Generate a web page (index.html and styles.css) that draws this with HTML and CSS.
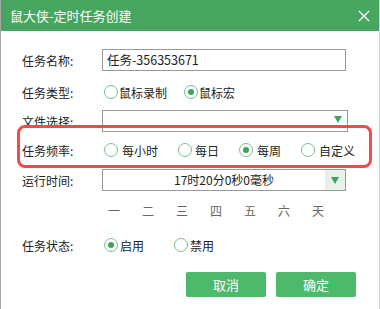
FILE: index.html
```html
<!DOCTYPE html>
<html lang="zh-CN">
<head>
    <meta charset="UTF-8">
    <title>鼠大侠-定时任务创建</title>
    <link rel="stylesheet" href="styles.css">
</head>
<body>
    <div class="dialog">
        <div class="title-bar">
            <span class="title">鼠大侠-定时任务创建</span>
            <svg class="close" width="12" height="12" viewBox="0 0 12 12">
                <path d="M1 1L11 11M11 1L1 11" stroke="#fff" stroke-width="1.4"/>
            </svg>
        </div>

        <div class="form">
            <div class="row row-name">
                <span class="label">任务名称:</span>
                <div class="box text-box">任务-356353671</div>
            </div>

            <div class="row row-type">
                <span class="label">任务类型:</span>
                <label class="radio tight"><span class="dot"></span>鼠标录制</label>
                <label class="radio tight"><span class="dot checked"></span>鼠标宏</label>
            </div>

            <div class="row row-file">
                <span class="label">文件选择:</span>
                <div class="box select-box">
                    <span class="arrow"></span>
                </div>
            </div>

            <div class="row row-freq">
                <span class="label">任务频率:</span>
                <label class="radio"><span class="dot"></span>每小时</label>
                <label class="radio"><span class="dot"></span>每日</label>
                <label class="radio"><span class="dot checked"></span>每周</label>
                <label class="radio"><span class="dot"></span>自定义</label>
            </div>

            <div class="row row-time">
                <span class="label">运行时间:</span>
                <div class="box time-box">
                    <span class="time-value">17时20分0秒0毫秒</span>
                    <span class="time-btn"><span class="arrow"></span></span>
                </div>
            </div>

            <div class="row row-week">
                <span class="label"></span>
                <div class="weekdays">
                    <span>一</span><span>二</span><span>三</span><span>四</span><span>五</span><span>六</span><span>天</span>
                </div>
            </div>

            <div class="row row-status">
                <span class="label">任务状态:</span>
                <label class="radio status"><span class="dot checked"></span>启用</label>
                <label class="radio status"><span class="dot"></span>禁用</label>
            </div>

            <div class="actions">
                <button type="button" class="btn">取消</button>
                <button type="button" class="btn">确定</button>
            </div>
        </div>

        <!-- highlight around the frequency row -->
        <div class="highlight"></div>
    </div>
</body>
</html>
```

FILE: styles.css
```css
body {
    margin: 0;
    font-family: "Noto Sans CJK SC", "Liberation Sans", sans-serif;
    font-size: 12px;
    color: #222;
    background: #fff;
}

.dialog {
    position: relative;
    width: 380px;
    height: 309px;
    box-sizing: border-box;
    border-left: 1px solid #a8a8a8;
    border-right: 1px solid #d0d0d0;
    overflow: hidden;
}

.title-bar {
    display: flex;
    align-items: center;
    justify-content: space-between;
    height: 31px;
    margin: 0 -1px;
    padding: 0 10px 0 10px;
    background: #46a660;
    color: #fff;
}

.title {
    font-size: 13px;
}

.form {
    padding: 18px 0 0 21px;
}

.row {
    display: flex;
    align-items: center;
    height: 22px;
    white-space: nowrap;
}

.label {
    width: 80px;
    flex: none;
}

.row-type { margin-top: 10px; }
.row-file { margin-top: 7px; }
.row-freq { margin-top: 7px; }
.row-time { margin-top: 8px; }
.row-week { margin-top: 8px; }
.row-status { margin-top: 13px; }

.box {
    box-sizing: border-box;
    height: 22px;
    border: 1px solid #999;
    background: #fff;
}

.text-box {
    width: 244px;
    padding-left: 4px;
    line-height: 20px;
    font-size: 12.5px;
}

.select-box {
    position: relative;
    width: 246px;
}

.arrow {
    display: block;
    width: 0;
    height: 0;
    border-left: 4px solid transparent;
    border-right: 4px solid transparent;
    border-top: 7px solid #3fa55b;
}

.select-box .arrow {
    position: absolute;
    right: 5px;
    top: 5px;
}

.time-box {
    display: flex;
    width: 244px;
    padding-left: 20px;
}

.time-value {
    flex: 1;
    text-align: center;
    line-height: 20px;
}

.time-btn {
    display: flex;
    align-items: center;
    justify-content: center;
    width: 20px;
    background: #e6f1e7;
}

.radio {
    display: inline-flex;
    flex: none;
    align-items: center;
    gap: 4px;
    margin-left: 2px;
    margin-right: 18px;
}

.radio.tight {
    gap: 1px;
    margin-right: 15px;
}

.radio.status {
    gap: 2px;
    margin-right: 28px;
}

.row-freq .radio:nth-of-type(2) {
    gap: 3px;
}

.dot {
    position: relative;
    flex: none;
    box-sizing: border-box;
    width: 14px;
    height: 14px;
    border: 1.5px solid #79c08a;
    border-radius: 50%;
    background: #fff;
}

.dot.checked::after {
    content: "";
    position: absolute;
    left: 2.5px;
    top: 2.5px;
    width: 6px;
    height: 6px;
    border-radius: 50%;
    background: #3da558;
}

.weekdays {
    display: flex;
    gap: 22px;
    padding-left: 6px;
    color: #666;
}

.actions {
    display: flex;
    gap: 10px;
    margin-top: 16px;
    padding-left: 164px;
}

.btn {
    width: 80px;
    height: 25px;
    border: none;
    border-radius: 2px;
    background: #4eb86b;
    color: #fff;
    font-family: inherit;
    font-size: 13px;
    padding: 0;
}

.highlight {
    position: absolute;
    left: 16px;
    top: 125px;
    width: 355px;
    height: 43px;
    box-sizing: border-box;
    border: 3px solid #f24a4a;
    border-radius: 8px;
}
```
